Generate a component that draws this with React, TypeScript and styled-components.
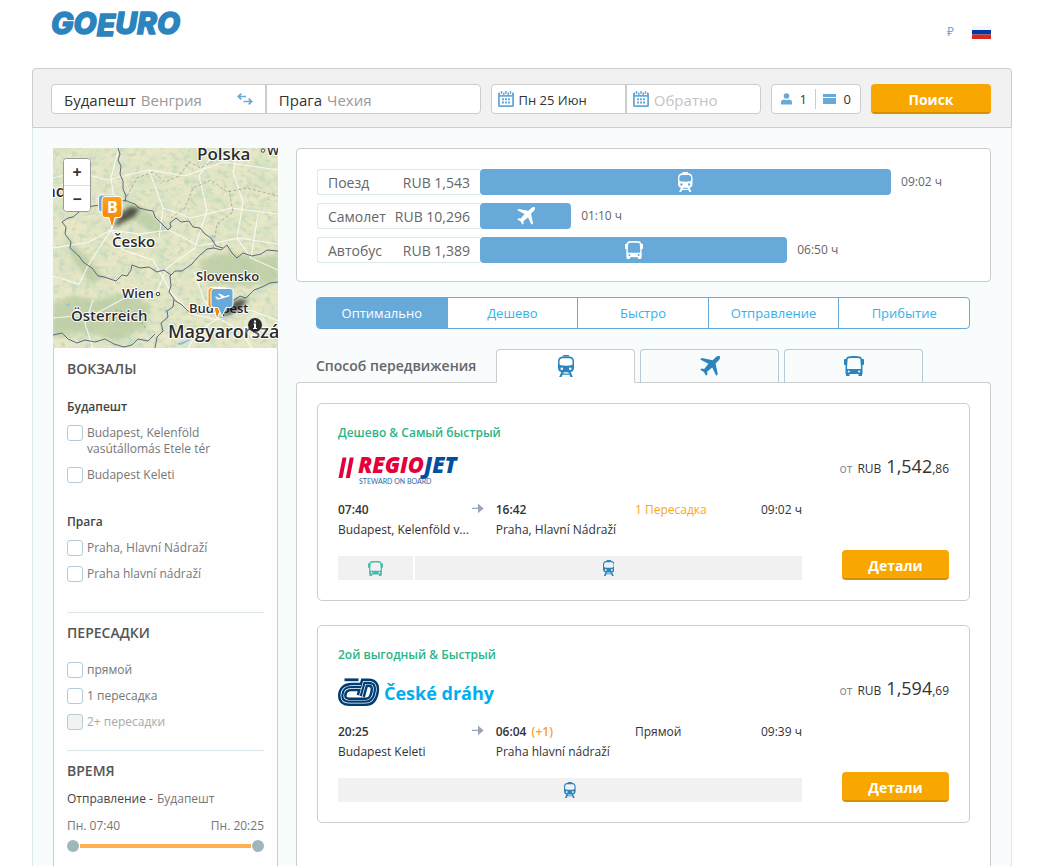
import React, { useState } from 'react';
import styled, { createGlobalStyle, css } from 'styled-components';

const blue = '#67a9d9';
const deepBlue = '#2b84bd';
const orange = '#f8a600';
const line = '#cccccc';
const paleLine = '#dbe8ee';

const GlobalStyle = createGlobalStyle`
  *, *::before, *::after { box-sizing: border-box; }
  body {
    margin: 0;
    background: #fff;
    color: #333;
    font-family: "Open Sans", "Noto Sans", sans-serif;
    font-size: 12px;
    line-height: 16px;
  }
  button, input { font-family: inherit; }
  button { cursor: pointer; }
  h2, h3, p, ul { margin: 0; padding: 0; }
`;

const Page = styled.div`
  min-height: 100vh;
  display: flex;
  flex-direction: column;
  padding: 0 36px 0 32px;
`;

const Header = styled.header`
  height: 68px;
  display: flex;
  justify-content: space-between;
  align-items: flex-start;
  padding: 0 21px 0 18px;
`;

const HeaderTools = styled.div`
  display: flex;
  align-items: center;
  gap: 18px;
  height: 64px;
`;

const PlainButton = styled.button`
  border: 0;
  padding: 0;
  background: none;
  color: ${blue};
  display: flex;
  font-size: 12px;
  line-height: 16px;
`;

/* Search bar */

const SearchBar = styled.form`
  display: flex;
  gap: 10px;
  padding: 15px 20px 13px 18px;
  background: #f1f1f1;
  border: 1px solid ${line};
  border-radius: 4px 4px 0 0;
`;

const FieldGroup = styled.div<{ $grow: number }>`
  flex: ${p => p.$grow} 1 0;
  min-width: 0;
  display: flex;
  height: 30px;
  background: #fff;
  border: 1px solid ${line};
  border-radius: 4px;
`;

const Field = styled.label<{ $pad: number }>`
  flex: 1 1 0;
  min-width: 0;
  display: flex;
  align-items: center;
  gap: 5px;
  padding: 0 12px 0 ${p => p.$pad}px;
  color: #999;
  font-size: 15px;
  & + & { border-left: 2px solid ${line}; }
`;

const FieldInput = styled.input<{ $fit?: boolean; $small?: boolean }>`
  border: 0;
  outline: 0;
  padding: 2px 0 0;
  margin: 0;
  background: none;
  min-width: 0;
  color: #333;
  font-size: ${p => (p.$small ? 13 : 15)}px;
  ${p => (p.$fit ? css`field-sizing: content;` : css`flex: 1 1 0; width: 0;`)}
  &::placeholder { color: #c4c4c4; opacity: 1; }
`;

const Country = styled.span`
  flex: 1;
  padding-top: 2px;
`;

const Travellers = styled.button`
  flex: none;
  width: 90px;
  height: 30px;
  display: flex;
  align-items: center;
  justify-content: space-between;
  padding: 0 9px;
  border: 1px solid ${line};
  border-radius: 4px;
  background: #fff;
  color: #333;
  font-size: 13px;
`;

const TravellersRule = styled.span`
  width: 1px;
  height: 20px;
  background: ${line};
`;

const ActionButton = styled.button<{ $width: number }>`
  flex: none;
  width: ${p => p.$width}px;
  height: 30px;
  border: 0;
  border-bottom: 2px solid #d68f00;
  border-radius: 4px;
  padding: 4px 0 0;
  background: ${orange};
  color: #fff;
  font-size: 14px;
  line-height: 20px;
  font-weight: 700;
`;

/* Body columns */

const Body = styled.main`
  flex: 1;
  display: flex;
  gap: 18px;
  padding: 20px 20px 0;
  background: #f8fcfd;
  border: solid ${paleLine};
  border-width: 0 1px;
`;

const Sidebar = styled.aside`
  flex: none;
  width: 225px;
  display: flex;
  flex-direction: column;
`;

const Filters = styled.div`
  flex: 1;
  padding: 1px 13px 0;
  background: #fefefe;
  border: solid ${line};
  border-width: 0 1px;
`;

const FilterSection = styled.section`
  padding: 10px 0 20px;
  & + & { border-top: 1px solid ${paleLine}; }
`;

const FilterTitle = styled.h2<{ $gap: number }>`
  margin-bottom: ${p => p.$gap}px;
  color: #555;
  font-size: 14px;
  line-height: 20px;
  font-weight: 600;
`;

const StationGroup = styled.div`
  padding-bottom: 10px;
  & + & { padding-top: 20px; }
`;

const StationTitle = styled.h3`
  margin-bottom: 10px;
  color: #444;
  font-size: 12px;
  line-height: 17px;
  font-weight: 600;
`;

const OptionList = styled.ul`
  list-style: none;
  display: flex;
  flex-direction: column;
  gap: 10px;
`;

const Option = styled.label<{ $muted?: boolean }>`
  display: flex;
  gap: 4px;
  color: ${p => (p.$muted ? '#aaa' : '#777')};
`;

const Tick = styled.input`
  appearance: none;
  flex: none;
  width: 16px;
  height: 16px;
  margin: 0;
  border: 1px solid #b4ccd6;
  border-radius: 3px;
  background: #fff;
  &:disabled { background: #f1f3f3; }
  &:checked { background: ${blue}; }
`;

const TimeCaption = styled.p`
  color: #777;
  margin-bottom: 11px;
  b { color: #444; font-weight: 400; margin-right: 1px; }
`;

const TimeEnds = styled.div`
  display: flex;
  justify-content: space-between;
  color: #777;
  margin-bottom: 6px;
`;

const RangeBox = styled.div`
  display: grid;
  height: 12px;
  align-items: center;
`;

const RangeTrack = styled.span`
  grid-area: 1 / 1;
  height: 4px;
  margin: 0 13px;
  background: #ffb04c;
`;

const RangeInput = styled.input`
  grid-area: 1 / 1;
  appearance: none;
  width: 100%;
  height: 12px;
  margin: 0;
  background: none;
  pointer-events: none;
  &::-webkit-slider-thumb {
    appearance: none;
    pointer-events: auto;
    width: 12px;
    height: 12px;
    border-radius: 50%;
    background: #9fb7bc;
  }
`;

/* Map */

const MapBox = styled.div`
  position: relative;
  height: 200px;
  overflow: hidden;
  background: #dde2bb;
  svg { display: block; }
`;

const ZoomControl = styled.div`
  position: absolute;
  left: 10px;
  top: 10px;
  width: 28px;
  border: 1px solid #999;
  border-radius: 4px;
  background: #fff;
  overflow: hidden;
`;

const ZoomButton = styled.button`
  display: flex;
  align-items: center;
  justify-content: center;
  width: 100%;
  height: 26px;
  border: 0;
  padding: 0;
  background: #fff;
  color: #333;
  font-size: 16px;
  font-weight: 700;
  & + & { border-top: 1px solid #ddd; }
`;

/* Results */

const Results = styled.div`
  flex: 1;
  min-width: 0;
  display: flex;
  flex-direction: column;
`;

const ChartCard = styled.section`
  display: flex;
  flex-direction: column;
  gap: 8px;
  padding: 20px 20px 18px;
  background: #fff;
  border: 1px solid ${line};
  border-radius: 4px;
`;

const ChartRow = styled.div`
  display: flex;
  height: 26px;
  color: #666;
`;

const ChartLabel = styled.div`
  flex: none;
  width: 163px;
  display: flex;
  justify-content: space-between;
  align-items: center;
  padding: 2px 10px 0;
  border: 1px solid ${paleLine};
  border-right: 0;
  border-radius: 3px 0 0 3px;
  font-size: 14px;
  line-height: 20px;
`;

const ChartTrack = styled.div`
  flex: 1;
  min-width: 0;
  display: flex;
  align-items: center;
  gap: 10px;
  white-space: nowrap;
`;

const ChartBar = styled.div`
  flex: none;
  height: 26px;
  display: flex;
  align-items: center;
  justify-content: center;
  border-radius: 4px;
  background: ${blue};
  color: #fff;
`;

const SortTabs = styled.div`
  display: flex;
  margin: 15px 21px 20px 20px;
  height: 32px;
  border: 1px solid ${blue};
  border-radius: 4px;
  background: #fff;
  overflow: hidden;
`;

const SortTab = styled.button<{ $active: boolean }>`
  flex: 1 1 0;
  border: 0;
  padding: 0;
  background: ${p => (p.$active ? blue : 'transparent')};
  color: ${p => (p.$active ? '#fff' : '#35b2ea')};
  font-size: 13px;
  & + & { border-left: 1px solid ${blue}; }
`;

const ModeRow = styled.div`
  display: flex;
  gap: 5px;
  margin: 0 20px -1px;
  position: relative;
`;

const ModeCaption = styled.span`
  width: 175px;
  padding-top: 7px;
  color: #666;
  font-size: 14px;
  line-height: 20px;
  font-weight: 600;
  white-space: nowrap;
`;

const ModeTab = styled.button<{ $active: boolean }>`
  flex: 0 1 139px;
  height: 34px;
  display: flex;
  align-items: center;
  justify-content: center;
  padding: 0;
  border: 1px solid ${p => (p.$active ? line : '#b4ccd6')};
  border-bottom-color: ${p => (p.$active ? '#fff' : line)};
  border-radius: 4px 4px 0 0;
  background: ${p => (p.$active ? '#fff' : '#f8fcfd')};
  color: ${deepBlue};
`;

const TripPanel = styled.section`
  flex: 1;
  display: flex;
  flex-direction: column;
  gap: 24px;
  padding: 20px 20px 42px;
  background: #fff;
  border: 1px solid ${line};
  border-bottom: 0;
  border-radius: 4px 4px 0 0;
`;

const TripCard = styled.article`
  display: flex;
  gap: 40px;
  padding: 20px;
  border: 1px solid ${line};
  border-radius: 5px;
`;

const TripInfo = styled.div`
  flex: 1;
  min-width: 0;
`;

const TripTag = styled.p`
  margin-bottom: 12px;
  color: #2cb487;
  line-height: 18px;
  font-weight: 600;
`;

const Carrier = styled.div`
  height: 32px;
  margin-bottom: 14px;
  svg { display: block; }
`;

const Legs = styled.div`
  display: grid;
  grid-template-columns: 34fr 30fr 27fr 9fr;
  margin-bottom: 16px;
  line-height: 20px;
  white-space: nowrap;
`;

const LegStart = styled.div`
  display: flex;
  justify-content: space-between;
  padding-right: 12px;
  color: #9aa6b8;
  & > svg { margin-top: 3px; }
`;

const Clock = styled.p`
  color: #333;
  font-weight: 600;
  span { color: #f6a032; margin-left: 2px; }
`;

const Place = styled.p`
  color: #333;
`;

const Changes = styled.p<{ $some: boolean }>`
  color: ${p => (p.$some ? '#f6a623' : '#333')};
`;

const Duration = styled.p`
  text-align: right;
`;

const Segments = styled.div`
  display: flex;
  gap: 2px;
  height: 24px;
`;

const Segment = styled.div<{ $share: number; $color: string }>`
  flex: ${p => p.$share} 1 0;
  display: flex;
  align-items: center;
  justify-content: center;
  background: #f1f1f1;
  color: ${p => p.$color};
`;

const TripBuy = styled.div`
  flex: none;
  width: 107px;
  display: flex;
  flex-direction: column;
  align-items: flex-end;
  justify-content: space-between;
  padding-top: 28px;
`;

const Price = styled.p`
  display: flex;
  align-items: baseline;
  color: #333;
  font-size: 12px;
  line-height: 28px;
  white-space: nowrap;
  small { font-size: 12px; color: #888; margin-right: 5px; }
  strong { font-size: 18px; font-weight: 400; margin-left: 5px; }
`;

/* Icons */

const TrainIcon = ({ h = 22 }: { h?: number }) => (
  <svg width={(h * 16) / 22} height={h} viewBox="0 0 16 22" fill="currentColor" aria-hidden="true">
    <path d="M5.400 0h5.200l.8 1.600H4.600z" />
    <path
      fillRule="evenodd"
      d="M4 1.400h8c2.400.3 4 2.200 4 4.800v6.600c0 2.800-1.400 4.400-4 4.400H4c-2.600 0-4-1.600-4-4.400V6.200C0 3.600 1.600 1.700 4 1.400z M4 3.200C2.400 3.600 1.600 4.600 1.500 6.400V9c0 .7.4 1.100 1.200 1.200 3.500.6 7.100.6 10.600 0 .8-.1 1.200-.5 1.200-1.200V6.400C14.400 4.600 13.600 3.600 12 3.200z M3.800 12.400a1.300 1.300 0 1 0 0 2.600 1.300 1.300 0 0 0 0-2.600z M12.200 12.400a1.300 1.300 0 1 0 0 2.600 1.300 1.300 0 0 0 0-2.600z"
    />
    <path d="M3.400 16.800h2.500L3.600 22H1.200zM12.600 16.800h-2.500l2.300 5.200h2.400zM4.600 18.400h6.800v1.300H4.600z" />
  </svg>
);

const BusIcon = ({ h = 20 }: { h?: number }) => (
  <svg width={h} height={h} viewBox="0 0 20 20" fill="currentColor" aria-hidden="true">
    <path
      fillRule="evenodd"
      d="M4.500.4c3.600-.6 7.400-.6 11 0 1.300.2 2 .9 2.200 2.200l.7.4h.8c.5 0 .8.3.8.8v4.400c0 .5-.4.8-1 .8h-.5v9H1.500V9H1c-.6 0-1-.3-1-.8V3.800c0-.5.3-.8.8-.8h.8l.7-.4C2.500 1.300 3.200.6 4.500.4z M5 2.200c-.8.1-1.300.5-1.400 1.200L3 12c0 .7.4 1.100 1.100 1.100h11.800c.7 0 1.100-.4 1.100-1.100l-.6-8.600c-.1-.7-.6-1.100-1.400-1.200-3.400-.4-6.600-.4-10 0z M4.800 14.400a1.100 1.100 0 1 0 0 2.200 1.100 1.100 0 0 0 0-2.200z M15.200 14.400a1.100 1.100 0 1 0 0 2.200 1.100 1.100 0 0 0 0-2.200z"
    />
    <path d="M2 17.500h3.500V20H2zM14.500 17.500H18V20h-3.500z" />
  </svg>
);

const PlaneIcon = ({ h = 20 }: { h?: number }) => (
  <svg width={h} height={h} viewBox="0 0 20 20" fill="currentColor" aria-hidden="true">
    <path d="M19.700.3c-.9-.7-2.500-.2-3.700.8L12.600 4.300 1.900 2.100.2 3.500l8.200 4.300-4.200 5.100-2.600-.4L.2 13.800l3.700 2.100L6 19.800l1.400-1.400-.3-2.700 5.100-4.100 4 8.200 1.600-1.600-2.200-10.700L19 4c1-1.200 1.500-2.900.7-3.700z" />
  </svg>
);

const ArrowIcon = () => (
  <svg width="12" height="11" viewBox="0 0 12 11" fill="currentColor" aria-hidden="true">
    <path d="M0 4.800h6V.5l5.700 5L6 10.300V6H0z" />
  </svg>
);

const SwapIcon = () => (
  <svg width="16" height="12" viewBox="0 0 16 12" fill="none" stroke={blue} strokeWidth="1.7" aria-hidden="true">
    <path d="M9 3.500H1.500M4.300.6L1.300 3.500l3 2.900M6.500 8.500h8M11.700 5.600l3 2.900-3 2.900" />
  </svg>
);

const CalendarIcon = () => (
  <svg width="16" height="16" viewBox="0 0 16 16" aria-hidden="true">
    <path fill={blue} fillRule="evenodd" d="M1 1.500h1V4h3V1.500h1.500V4h3V1.500H11V4h3V1.500h1l1 1V15l-1 1H1l-1-1V2.500zM1.800 5.800v8.400h12.400V5.800z" />
    <path fill={blue} d="M2.800 0h1.400v3H2.800zM7.300 0h1.400v3H7.300zM11.800 0h1.400v3h-1.400zM4 7.200h2v2H4zM7 7.200h2v2H7zM10 7.200h2v2h-2zM4 10.400h2v2H4zM7 10.400h2v2H7zM10 10.400h2v2h-2z" />
  </svg>
);

const PersonIcon = () => (
  <svg width="11" height="12" viewBox="0 0 11 12" fill={blue} aria-hidden="true">
    <circle cx="5.5" cy="3" r="2.800" />
    <path d="M0 11.500V9.500C0 7.500 1.500 6.600 3.500 6.600c1.300.8 2.700.8 4 0 2 0 3.500.9 3.500 2.900v2z" />
  </svg>
);

const CardIcon = () => (
  <svg width="13" height="10" viewBox="0 0 13 10" fill={blue} aria-hidden="true">
    <path d="M0 0h13v3H0zM0 4h13v6H0z" />
  </svg>
);

const FlagIcon = () => (
  <svg width="19" height="13" viewBox="0 0 19 13" aria-hidden="true">
    <path fill="#f4f6f8" d="M0 0h19v4H0z" />
    <path fill="#0039a6" d="M0 4h19v4.500H0z" />
    <path fill="#d52b1e" d="M0 8.500h19V13H0z" />
  </svg>
);

const SiteLogo = () => (
  <svg width="152" height="48" viewBox="0 0 152 48" role="img" aria-label="GoEuro">
    <text
      x="1"
      y="34"
      fill={deepBlue}
      stroke={deepBlue}
      strokeWidth="1.4"
      strokeLinejoin="round"
      fontFamily="Inter"
      fontWeight="800"
      fontStyle="italic"
      fontSize="30"
    >
      GO<tspan dy="2">E</tspan><tspan dy="-2">URO</tspan>
    </text>
  </svg>
);

const RegioJetLogo = () => (
  <svg width="140" height="32" viewBox="0 0 140 32" role="img" aria-label="RegioJet">
    <path fill="#e4003a" d="M4.500 3.500h4L4.500 24h-4zM11.800 3.500h4L11.800 24h-4z" />
    <text x="20" y="19" fill="#e4003a" fontWeight="800" fontStyle="italic" fontSize="22">
      REGIO<tspan fill="#004f9f">JET</tspan>
    </text>
    <text x="21" y="30" fill="#2d66a8" fontFamily="Lato" fontSize="7">STEWARD ON BOARD</text>
  </svg>
);

const cdTrack = 'M23 11H13.500C8 11 4.500 14 4.300 19.500c0 4.200 2.400 6.200 7 6.200H27.500C33 25.700 35.500 22.500 36.600 16 37.700 9.500 35.500 6.800 30.500 6.800H26.500L22.800 20';

const CeskeDrahyLogo = () => (
  <svg width="164" height="32" viewBox="0 0 164 32" role="img" aria-label="České dráhy">
    <g fill="none" strokeLinejoin="miter">
      <path stroke="#003d73" strokeWidth="8.6" d={cdTrack} />
      <path stroke="#fff" strokeWidth="3.6" d={cdTrack} />
      <path stroke="#003d73" strokeWidth="2.2" d={cdTrack} />
      <path stroke="#003d73" strokeWidth="2.8" d="M6.500 3.800H20.500" />
    </g>
    <text x="46" y="24" fill="#00aeef" fontWeight="700" fontSize="18">České dráhy</text>
  </svg>
);

/* Route map: terrain, roads, state borders, place names and pins */

const mapLabels: [string, number, number, number][] = [
  ['Polska', 144, 12, 17],
  ['W', 214, 7, 13],
  ['nd', -8, 49, 17],
  ['Česko', 59, 99, 15],
  ['Slovensko', 143, 133, 13],
  ['Wien', 69, 150, 13],
  ['Budapest', 136, 165, 13],
  ['Österreich', 18, 173, 15],
  ['Magyarorszá', 115, 190, 18],
];

const RouteMap = () => (
  <svg width="100%" height="200" viewBox="0 0 225 200" preserveAspectRatio="xMidYMid slice" role="img" aria-label="Карта маршрута">
    <defs>
      <filter id="terrain" x="0" y="0" width="100%" height="100%">
        <feTurbulence type="fractalNoise" baseFrequency="0.05 0.07" numOctaves="5" seed="7" />
        <feColorMatrix values="0 0 0 0 0.66  0 0 0 0 0.76  0 0 0 0 0.54  2.6 0 0 0 -1.05" />
      </filter>
      <filter id="hills" x="0" y="0" width="100%" height="100%">
        <feTurbulence type="fractalNoise" baseFrequency="0.16 0.22" numOctaves="3" seed="3" />
        <feColorMatrix values="0 0 0 0 0.47  0 0 0 0 0.62  0 0 0 0 0.46  3 0 0 0 -1.45" />
      </filter>
      <filter id="shade"><feGaussianBlur stdDeviation="2" /></filter>
      <linearGradient id="pinOrange" x1="0" y1="0" x2="0" y2="1">
        <stop offset="0" stopColor="#ffa41c" />
        <stop offset="1" stopColor="#f07c00" />
      </linearGradient>
    </defs>
    <rect width="225" height="200" fill="#e8e7c6" />
    <rect width="225" height="200" filter="url(#terrain)" />
    <g fill="#a3bd8c" opacity="0.5" filter="url(#shade)">
      <path d="M0 155l20-8 25 5 30-6 22 10-4 24-30 12-35-8-28 6z" />
      <path d="M145 112l30-8 26 6 24-4v28l-30 4-40-2z" />
      <path d="M14 90l20 18 18 22-14 6-20-26z" />
      <path d="M70 52l26 12 20 18-14 4-28-18z" />
    </g>
    <rect width="225" height="200" filter="url(#hills)" opacity="0.6" />
    <g fill="none" stroke="#fff" strokeWidth="1.1" opacity="0.8">
      <path d="M0 30l24-6 30 8 42-10 36 6 38-14 55 8M58 82l-22 12-36 6M58 82l12 20 30 10 19 34 20 20 26 6 32-10 32 12M58 82l28 4 30-4 30 16 40-8 39 6" />
      <path d="M66 0l-8 30 4 30-4 22M104 144l-32 6-30 16-42 4M104 144l10-24 28-20 12-38-8-34 18-28M165 170l-14-18-10-28M165 170l-20 14-10 16M165 170l22 12 12 18M186 0l-6 24 10 30-6 36 14 20M0 128l26 8 10-20 22-34M40 200l-8-24 8-24" />
      <path d="M110 60l28 10 40-10 47 6M96 22l14 38-4 30M205 66l-7 44 27 12" />
    </g>
    <g fill="none" stroke="#86908c" strokeWidth="0.8" strokeDasharray="3 2" opacity="0.8">
      <path d="M74 48l10-18 16-6 12 10 14-6 10-14 12 6 20-12M118 70l14-10 8-20 18-8 16 12 20-4 31 8M160 100l4-24 16-12-4-22M50 172l14-10 20 6 10 14" />
    </g>
    <g fill="none" stroke="#5d6780" strokeWidth="1" strokeLinejoin="round">
      <path d="M65 0l2 6-2 6 3 6-1 8 3 7 0 8 3 7-1 6" />
      <path d="M9 74l6-4 5-1 6-5 6-4 8-2 8-1 8-3 8 1 8-3 4 2 6 2 4 4 8 2 6 1 2 6 6 6 7 7 3-3-1-4 6-5 5 4 8-1 4 6 7 1 5 6 6 4 5 8 7 2" />
      <path d="M9 74l4 5-1 7 6 8-1 6 9 8 4 6 9 6 6 8 6 1 12 4 6-6 5 1 4-6 1-5 8 3 9-1 8 5 7-2 7 5" />
      <path d="M117 128l5-5 7 0 10-7 6-7 9-8 7-1 7 2 6-5 5 8 5 5 6-5 9 3 9-2 6-4 11 1" />
      <path d="M117 128l1 10-2 6 5 7-1 8-6 4 1 6-7 6 2 8-6 6-2 11M121 152l8 5 6 6 10 2 14-3 10-6 12-4 6-4 6 2 8-8 8-3 8-4 8-1" />
      <path d="M0 187l9-2 6 6 9 4 8-3 10 2 10-3 9 5 10 3 8-2 6-6 10 2 7-7" />
    </g>
    <g fill="#7ec0ee">
      <path d="M123 196l9-3 5-2-1 2-8 4zM13 157l4-2-1 3zM111 164l3-3 0 4zM158 88l3-1-1 3z" />
    </g>
    <circle cx="105" cy="146" r="1.7" fill="#fff" stroke="#444" />
    <circle cx="210" cy="2.5" r="1.7" fill="#fff" stroke="#444" />
    <g fill="#2c2c2c" stroke="#fff" strokeWidth="2" strokeLinejoin="round" paintOrder="stroke" fontWeight="600">
      {mapLabels.map(([name, x, y, size]) => (
        <text key={name} x={x} y={y} fontSize={size}>{name}</text>
      ))}
    </g>
    <path d="M60 80l8-16 10-5 9 1-6 9z" fill="#000" opacity="0.6" filter="url(#shade)" />
    <path d="M168 170l8-14 10-5 9 1-8 10z" fill="#000" opacity="0.6" filter="url(#shade)" />
    <rect x="45.5" y="47" width="18" height="17" rx="3" fill={blue} stroke="#fff" />
    <path d="M52 48.500h14q3 0 3 3v15q0 3-3 3h-4l-3 11-3-11h-4q-3 0-3-3v-15q0-3 3-3z" fill="url(#pinOrange)" stroke="#fff" />
    <text x="54" y="65" fill="#fff" fontSize="16" fontWeight="700">B</text>
    <path d="M158 139.500h14v20h-4l-4 12-3-12h-3q-3 0-3-3v-14q0-3 3-3z" fill="url(#pinOrange)" stroke="#fff" />
    <path d="M161 140.500h16q3 0 3 3v13q0 3-3 3h-4l-4 9-4-9h-4q-3 0-3-3v-13q0-3 3-3z" fill={blue} stroke="#fff" />
    <path d="M162 149l1.500-.5 2 1.500 3-.8-3.500-3.200 1.600-.4 5 2.600 3.500-1c1.600-.4 2.200.8.700 1.400l-11 3.200z" fill="#fff" />
    <circle cx="202" cy="177" r="12" fill="#fff" opacity="0.25" />
    <circle cx="202" cy="177" r="7" fill="#2b2b2b" />
    <path d="M200.500 175.500h2.500v4.500h1v1h-4v-1h1v-3.500h-.5zM201 172.500h2v2h-2z" fill="#fff" />
  </svg>
);

/* Data */

type Mode = 'train' | 'plane' | 'bus';

const modeNames: Record<Mode, string> = { train: 'Поезд', plane: 'Самолет', bus: 'Автобус' };

const ModeIcon = ({ mode, h }: { mode: Mode; h?: number }) =>
  mode === 'train' ? <TrainIcon h={h} /> : mode === 'plane' ? <PlaneIcon h={h} /> : <BusIcon h={h} />;

const chart: { mode: Mode; price: string; time: string; share: number; icon: number }[] = [
  { mode: 'train', price: 'RUB 1,543', time: '09:02 ч', share: 83.9, icon: 20 },
  { mode: 'plane', price: 'RUB 10,296', time: '01:10 ч', share: 18.6, icon: 18 },
  { mode: 'bus', price: 'RUB 1,389', time: '06:50 ч', share: 62.7, icon: 18 },
];

const sorts = ['Оптимально', 'Дешево', 'Быстро', 'Отправление', 'Прибытие'];

const stations = [
  { city: 'Будапешт', names: ['Budapest, Kelenföld vasútállomás Etele tér', 'Budapest Keleti'] },
  { city: 'Прага', names: ['Praha, Hlavní Nádraží', 'Praha hlavní nádraží'] },
];

const changeOptions = [
  { name: 'прямой' },
  { name: '1 пересадка' },
  { name: '2+ пересадки', disabled: true },
];

const trips: {
  tag: string;
  logo: React.ReactNode;
  from: [string, string];
  to: [string, string];
  plus?: string;
  changes: string;
  direct: boolean;
  time: string;
  price: [string, string];
  segments: { mode: Mode; share: number; color: string }[];
}[] = [
  {
    tag: 'Дешево & Самый быстрый',
    logo: <RegioJetLogo />,
    from: ['07:40', 'Budapest, Kelenföld v...'],
    to: ['16:42', 'Praha, Hlavní Nádraží'],
    changes: '1 Пересадка',
    direct: false,
    time: '09:02 ч',
    price: ['1,542', ',86'],
    segments: [
      { mode: 'bus', share: 75, color: '#4bb8ae' },
      { mode: 'train', share: 387, color: deepBlue },
    ],
  },
  {
    tag: '2ой выгодный & Быстрый',
    logo: <CeskeDrahyLogo />,
    from: ['20:25', 'Budapest Keleti'],
    to: ['06:04', 'Praha hlavní nádraží'],
    plus: '(+1)',
    changes: 'Прямой',
    direct: true,
    time: '09:39 ч',
    price: ['1,594', ',69'],
    segments: [{ mode: 'train', share: 1, color: deepBlue }],
  },
];

export default function App() {
  const [sort, setSort] = useState(sorts[0]);
  const [mode, setMode] = useState<Mode>('train');

  return (
    <>
      <GlobalStyle />
      <Page>
        <Header>
          <SiteLogo />
          <HeaderTools>
            <PlainButton type="button" aria-label="Валюта">₽</PlainButton>
            <PlainButton type="button" aria-label="Язык"><FlagIcon /></PlainButton>
          </HeaderTools>
        </Header>

        <SearchBar onSubmit={e => e.preventDefault()}>
          <FieldGroup $grow={430}>
            <Field $pad={12}>
              <FieldInput $fit aria-label="Откуда" defaultValue="Будапешт" />
              <Country>Венгрия</Country>
              <PlainButton type="button" aria-label="Поменять местами"><SwapIcon /></PlainButton>
            </Field>
            <Field $pad={12}>
              <FieldInput $fit aria-label="Куда" defaultValue="Прага" />
              <Country>Чехия</Country>
            </Field>
          </FieldGroup>
          <FieldGroup $grow={270}>
            <Field $pad={6}>
              <CalendarIcon />
              <FieldInput $small aria-label="Туда" defaultValue="Пн 25 Июн" />
            </Field>
            <Field $pad={6}>
              <CalendarIcon />
              <FieldInput aria-label="Обратно" placeholder="Обратно" />
            </Field>
          </FieldGroup>
          <Travellers type="button">
            <PersonIcon />
            <span>1</span>
            <TravellersRule />
            <CardIcon />
            <span>0</span>
          </Travellers>
          <ActionButton $width={120} type="submit">Поиск</ActionButton>
        </SearchBar>

        <Body>
          <Sidebar>
            <MapBox>
              <RouteMap />
              <ZoomControl>
                <ZoomButton type="button">+</ZoomButton>
                <ZoomButton type="button">−</ZoomButton>
              </ZoomControl>
            </MapBox>
            <Filters>
              <FilterSection>
                <FilterTitle $gap={19}>ВОКЗАЛЫ</FilterTitle>
                {stations.map(group => (
                  <StationGroup key={group.city}>
                    <StationTitle>{group.city}</StationTitle>
                    <OptionList>
                      {group.names.map(name => (
                        <li key={name}>
                          <Option>
                            <Tick type="checkbox" />
                            {name}
                          </Option>
                        </li>
                      ))}
                    </OptionList>
                  </StationGroup>
                ))}
              </FilterSection>
              <FilterSection>
                <FilterTitle $gap={19}>ПЕРЕСАДКИ</FilterTitle>
                <OptionList>
                  {changeOptions.map(o => (
                    <li key={o.name}>
                      <Option $muted={o.disabled}>
                        <Tick type="checkbox" disabled={o.disabled} />
                        {o.name}
                      </Option>
                    </li>
                  ))}
                </OptionList>
              </FilterSection>
              <FilterSection>
                <FilterTitle $gap={10}>ВРЕМЯ</FilterTitle>
                <TimeCaption><b>Отправление -</b> Будапешт</TimeCaption>
                <TimeEnds>
                  <span>Пн. 07:40</span>
                  <span>Пн. 20:25</span>
                </TimeEnds>
                <RangeBox>
                  <RangeTrack />
                  <RangeInput type="range" aria-label="Отправление не раньше" min={460} max={1225} defaultValue={460} />
                  <RangeInput type="range" aria-label="Отправление не позже" min={460} max={1225} defaultValue={1225} />
                </RangeBox>
              </FilterSection>
            </Filters>
          </Sidebar>

          <Results>
            <ChartCard>
              {chart.map(row => (
                <ChartRow key={row.mode}>
                  <ChartLabel>
                    <span>{modeNames[row.mode]}</span>
                    <span>{row.price}</span>
                  </ChartLabel>
                  <ChartTrack>
                    <ChartBar style={{ width: `${row.share}%` }}>
                      <ModeIcon mode={row.mode} h={row.icon} />
                    </ChartBar>
                    <span>{row.time}</span>
                  </ChartTrack>
                </ChartRow>
              ))}
            </ChartCard>

            <SortTabs>
              {sorts.map(name => (
                <SortTab key={name} type="button" $active={name === sort} onClick={() => setSort(name)}>
                  {name}
                </SortTab>
              ))}
            </SortTabs>

            <ModeRow>
              <ModeCaption>Способ передвижения</ModeCaption>
              {(['train', 'plane', 'bus'] as Mode[]).map(m => (
                <ModeTab key={m} type="button" aria-label={modeNames[m]} $active={m === mode} onClick={() => setMode(m)}>
                  <ModeIcon mode={m} />
                </ModeTab>
              ))}
            </ModeRow>

            <TripPanel>
              {trips.map(trip => (
                <TripCard key={trip.tag}>
                  <TripInfo>
                    <TripTag>{trip.tag}</TripTag>
                    <Carrier>{trip.logo}</Carrier>
                    <Legs>
                      <LegStart>
                        <div>
                          <Clock>{trip.from[0]}</Clock>
                          <Place>{trip.from[1]}</Place>
                        </div>
                        <ArrowIcon />
                      </LegStart>
                      <div>
                        <Clock>
                          {trip.to[0]}
                          {trip.plus && <span> {trip.plus}</span>}
                        </Clock>
                        <Place>{trip.to[1]}</Place>
                      </div>
                      <Changes $some={!trip.direct}>{trip.changes}</Changes>
                      <Duration>{trip.time}</Duration>
                    </Legs>
                    <Segments>
                      {trip.segments.map(s => (
                        <Segment key={s.mode} $share={s.share} $color={s.color}>
                          <ModeIcon mode={s.mode} h={s.mode === 'bus' ? 15 : 16} />
                        </Segment>
                      ))}
                    </Segments>
                  </TripInfo>
                  <TripBuy>
                    <Price>
                      <small>от</small>
                      <span>RUB</span>
                      <strong>{trip.price[0]}</strong>
                      <span>{trip.price[1]}</span>
                    </Price>
                    <ActionButton $width={107} type="button">Детали</ActionButton>
                  </TripBuy>
                </TripCard>
              ))}
            </TripPanel>
          </Results>
        </Body>
      </Page>
    </>
  );
}
